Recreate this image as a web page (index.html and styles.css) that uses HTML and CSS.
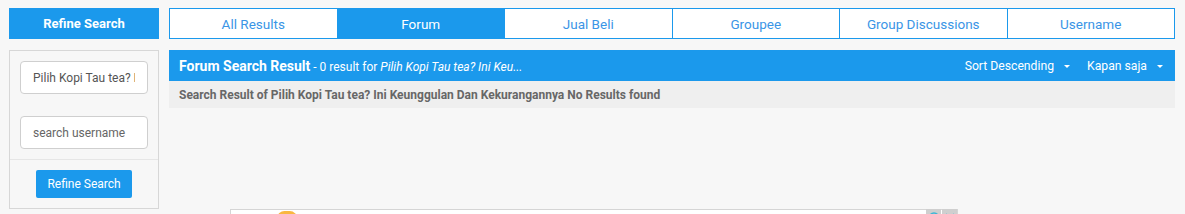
FILE: index.html
```html
<!DOCTYPE html>
<html>
<head>
<meta charset="utf-8">
<link rel="stylesheet" href="styles.css">
</head>
<body>
<div class="page">
  <aside class="side">
    <div class="side-head">Refine Search</div>
    <div class="side-box">
      <div class="side-fields">
        <input class="field" type="text" value="Pilih Kopi Tau tea? Ini Keunggulan Dan Kekurangannya">
        <input class="field" type="text" placeholder="search username">
      </div>
      <div class="side-foot">
        <button class="btn">Refine Search</button>
      </div>
    </div>
  </aside>
  <main class="main">
    <nav class="tabs">
      <a class="tab">All Results</a>
      <a class="tab active">Forum</a>
      <a class="tab">Jual Beli</a>
      <a class="tab">Groupee</a>
      <a class="tab">Group Discussions</a>
      <a class="tab">Username</a>
    </nav>
    <div class="result-bar">
      <div class="result-title"><b>Forum Search Result</b><span class="meta"> - 0 result for <i>Pilih Kopi Tau tea? Ini Keu...</i></span></div>
      <div class="result-tools">
        <span class="drop">Sort Descending <span class="caret"></span></span>
        <span class="drop">Kapan saja <span class="caret"></span></span>
      </div>
    </div>
    <div class="result-note">Search Result of Pilih Kopi Tau tea? Ini Keunggulan Dan Kekurangannya No Results found</div>
  </main>
</div>
<div class="ad">
  <div class="ad-shape"></div>
  <div class="ad-icons">
    <span class="ad-ic"><svg width="14" height="14" viewBox="0 0 14 14"><circle cx="7" cy="8" r="5" fill="none" stroke="#3cb6d6" stroke-width="1.5"/></svg></span>
    <span class="ad-ic"><svg width="14" height="14" viewBox="0 0 14 14"><path d="M3 4 L11 12 M11 4 L3 12" stroke="#3cb6d6" stroke-width="1.5"/></svg></span>
  </div>
</div>
</body>
</html>
```

FILE: styles.css
```css
html, body {
  margin: 0;
  padding: 0;
  background: #f7f7f7;
  font-family: Roboto, "Liberation Sans", Arial, sans-serif;
}
body {
  overflow: hidden;
}
.page {
  display: flex;
  gap: 10px;
  padding: 8px 10px 0 9px;
}
.side {
  width: 150px;
  flex: none;
  display: flex;
  flex-direction: column;
  gap: 11px;
}
.side-head {
  height: 31px;
  background: #1b99ec;
  color: #fff;
  font-weight: bold;
  font-size: 13px;
  display: flex;
  align-items: center;
  justify-content: center;
}
.side-box {
  border: 1px solid #d7d7d7;
  height: 159px;
  box-sizing: border-box;
}
.side-fields {
  display: flex;
  flex-direction: column;
  gap: 22px;
  padding: 10px 10px 10px 10px;
  border-bottom: 1px solid #e6e6e6;
}
.field {
  box-sizing: border-box;
  width: 128px;
  height: 33px;
  border: 1px solid #cfcfcf;
  border-radius: 4px;
  background: #fff;
  padding: 0 12px;
  font-family: Roboto, "Liberation Sans", Arial, sans-serif;
  font-size: 12px;
  color: #555;
  outline: none;
}
.field::placeholder {
  color: #666;
}
.side-foot {
  display: flex;
  justify-content: center;
  padding-top: 10px;
}
.btn {
  width: 96px;
  height: 28px;
  border: none;
  border-radius: 2px;
  background: #1b99ec;
  color: #fff;
  font-family: Roboto, "Liberation Sans", Arial, sans-serif;
  font-size: 12px;
  padding: 0;
}
.main {
  flex: 1;
  display: flex;
  flex-direction: column;
}
.tabs {
  display: flex;
  height: 31px;
  border: 1px solid #1b99ec;
  box-sizing: border-box;
  background: #fff;
  margin-bottom: 11px;
}
.tab {
  flex: 1;
  display: flex;
  align-items: center;
  justify-content: center;
  font-size: 13.5px;
  color: #3a95e6;
  border-left: 1px solid #1b99ec;
}
.tab:first-child {
  border-left: none;
}
.tab.active {
  background: #1b99ec;
  color: #fff;
}
.result-bar {
  height: 31px;
  background: #1b99ec;
  color: #fff;
  display: flex;
  align-items: center;
  justify-content: space-between;
  padding: 0 12px 0 10px;
}
.result-title b {
  font-size: 14px;
}
.meta {
  font-size: 12px;
}
.result-tools {
  display: flex;
  gap: 17px;
  font-size: 12.2px;
}
.drop {
  display: flex;
  align-items: center;
  gap: 10px;
}
.caret {
  display: inline-block;
  width: 0;
  height: 0;
  border-left: 3.5px solid transparent;
  border-right: 3.5px solid transparent;
  border-top: 3.5px solid #fff;
  margin-top: 1px;
}
.result-note {
  height: 27px;
  background: #efefef;
  color: #676767;
  font-weight: bold;
  font-size: 12px;
  display: flex;
  align-items: center;
  padding-left: 10px;
}
.ad {
  position: relative;
  margin: 0 0 0 230px;
  width: 728px;
  height: 90px;
  box-sizing: border-box;
  border: 1px solid #d5d5d5;
  background: #fff;
}
.ad-shape {
  position: absolute;
  left: 46px;
  top: 1px;
  width: 20px;
  height: 8px;
  background: #f9b740;
  border-radius: 10px 12px 0 0;
  transform: skewX(-10deg);
}
.ad-icons {
  position: absolute;
  right: 0;
  top: -1px;
  display: flex;
  gap: 1px;
}
.ad-ic {
  width: 15px;
  height: 15px;
  background: #cfcfcf;
  display: flex;
  align-items: center;
  justify-content: center;
}
```
